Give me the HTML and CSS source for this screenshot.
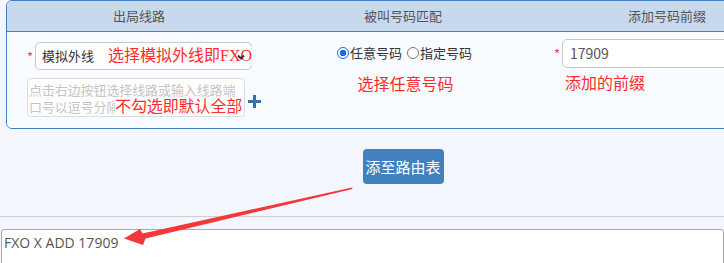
FILE: index.html
```html
<!DOCTYPE html>
<html lang="zh-CN">
<head>
    <meta charset="UTF-8">
    <title>路由设置</title>
    <link rel="stylesheet" href="styles.css">
</head>
<body>
    <div class="page">
        <div class="panel">
            <div class="cols head">
                <div>出局线路</div>
                <div>被叫号码匹配</div>
                <div>添加号码前缀</div>
            </div>
            <div class="cols body">
                <div class="cell trunk">
                    <div class="line">
                        <span class="req">*</span>
                        <div class="select">
                            模拟外线
                            <span class="note note-fxo">选择模拟外线即FXO</span>
                            <svg class="caret" width="8" height="6" viewBox="0 0 8 6"><path d="M1 1.5 L4 4.5 L7 1.5" fill="none" stroke="#333" stroke-width="2"/></svg>
                        </div>
                    </div>
                    <div class="line">
                        <div class="ports">
                            点击右边按钮选择线路或输入线路端口号以逗号分隔
                            <span class="note note-all">不勾选即默认全部</span>
                        </div>
                        <svg class="plus" width="13" height="13" viewBox="0 0 13 13"><rect x="5" y="0" width="3" height="13" fill="#3d6ea8"/><rect x="0" y="5" width="13" height="3" fill="#3d6ea8"/></svg>
                    </div>
                </div>
                <div class="cell match">
                    <div class="radios">
                        <label><span class="radio on"></span>任意号码</label>
                        <label><span class="radio"></span>指定号码</label>
                    </div>
                    <div class="note">选择任意号码</div>
                </div>
                <div class="cell prefix">
                    <div class="line">
                        <span class="req">*</span>
                        <div class="input">17909</div>
                    </div>
                    <div class="note">添加的前缀</div>
                </div>
            </div>
        </div>

        <div class="actions">
            <button class="btn">添至路由表</button>
        </div>

        <div class="result">FXO X ADD 17909</div>

        <svg class="arrow" width="724" height="263" viewBox="0 0 724 263">
            <polygon points="124,238.5 140,229 142.5,233.5 352,187.5 352.5,189 145.5,238.5 143,245" fill="#f2383a"/>
        </svg>
    </div>
</body>
</html>
```

FILE: styles.css
```css
body {
    margin: 0;
    background-color: #f3f7fd;
    font-family: "Noto Sans CJK SC", "Noto Sans", sans-serif;
    font-size: 13px;
    color: #333;
    overflow: hidden;
}
.page {
    position: relative;
    width: 724px;
    height: 263px;
    overflow: hidden;
}
.panel {
    margin-left: 6px;
    width: 792px;
    border: 1px solid #3f7fc1;
    border-radius: 6px;
    overflow: hidden;
}
.cols {
    display: grid;
    grid-template-columns: 264px 264px 264px;
}
.head {
    height: 30px;
    line-height: 30px;
    background-color: #c9d9ed;
    border-bottom: 1px solid #3f7fc1;
    color: #555;
    text-align: center;
}
.body {
    height: 96px;
    background-color: #f8fbff;
}
.cell {
    position: relative;
}
.line {
    display: flex;
    align-items: center;
}
.req {
    color: #e5484d;
    width: 8px;
    font-size: 13px;
}
.note {
    color: #ff2b2b;
    font-family: "Liberation Serif", "Noto Sans CJK SC", serif;
    font-size: 16px;
    line-height: 18px;
    white-space: nowrap;
}

/* outgoing trunk */
.trunk {
    padding: 10px 0 0 20px;
}
.select {
    position: relative;
    width: 209px;
    height: 26px;
    line-height: 26px;
    padding-left: 6px;
    border: 1px solid #c8c8c8;
    border-radius: 5px;
    background-color: #fff;
    color: #333;
}
.caret {
    position: absolute;
    right: 6px;
    top: 11px;
}
.note-fxo {
    position: absolute;
    left: 72px;
    top: 4px;
    background-color: #fff;
}
.ports {
    position: relative;
    margin-top: 8px;
    width: 214px;
    height: 35px;
    padding: 2px 1px 0 1px;
    border: 1px solid #dcdcdc;
    border-radius: 4px;
    background-color: #fff;
    color: #c4c4c4;
    line-height: 17px;
    letter-spacing: -0.1px;
}
.note-all {
    position: absolute;
    left: 87px;
    top: 19px;
    background-color: #fff;
}
.plus {
    margin: 15px 0 0 3px;
}

/* called number */
.match {
    padding-top: 14px;
    text-align: center;
}
.radios {
    display: flex;
    justify-content: center;
    gap: 5px;
    margin-left: 3px;
    line-height: 14px;
}
.radios label {
    display: flex;
    align-items: center;
}
.radio {
    width: 10px;
    height: 10px;
    border: 1px solid #767676;
    border-radius: 50%;
    background-color: #fff;
    margin-right: 1px;
}
.radio.on {
    border-color: #0f6fe8;
    background: radial-gradient(circle, #0f6fe8 3px, #fff 3.5px);
}
.match .note {
    margin: 16px 0 0 5px;
}

/* prefix */
.prefix {
    padding: 7px 0 0 19px;
}
.input {
    width: 205px;
    height: 27px;
    line-height: 27px;
    padding-left: 7px;
    border: 1px solid #c8c8c8;
    border-radius: 5px;
    background-color: #fff;
    color: #555;
    font-size: 14px;
}
.prefix .note {
    margin: 7px 0 0 11px;
}

.actions {
    width: 806px;
    height: 67px;
    padding-top: 20px;
    text-align: center;
    border-bottom: 1px solid #cfcfcf;
}
.btn {
    width: 81px;
    height: 35px;
    padding: 0;
    border: none;
    border-radius: 4px;
    background-color: #4281c1;
    color: #fff;
    font-family: "Noto Sans CJK SC", sans-serif;
    font-size: 15px;
}
.result {
    margin: 12px 0 0 1px;
    height: 40px;
    padding: 3px 2px;
    border: 1px solid #a9a9a9;
    border-radius: 3px;
    background-color: #fff;
    color: #555;
    font-family: "Open Sans", "Noto Sans", sans-serif;
    font-size: 14px;
}
.arrow {
    position: absolute;
    left: 0;
    top: 0;
    pointer-events: none;
}
```
